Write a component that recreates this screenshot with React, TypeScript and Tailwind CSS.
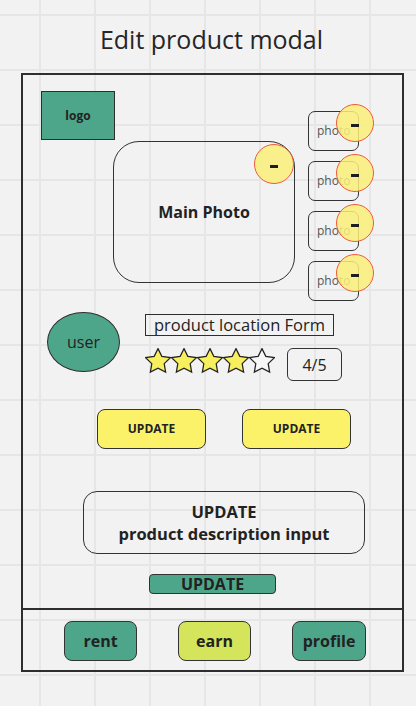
import React from "react";

const font = { fontFamily: '"Open Sans", "Noto Sans", sans-serif' };

function MinusBadge({ size }: { size: "lg" | "sm" }) {
  return (
    <div
      className={
        size === "lg"
          ? "absolute right-0 top-[2px] w-[40px] h-[40px] rounded-full border-[1.5px] border-[#ee5a3c] bg-[#faf07a]/85 flex items-center justify-center"
          : "absolute left-[27px] top-[-8px] w-[38px] h-[38px] rounded-full border-[1.5px] border-[#ee5a3c] bg-[#faf07a]/85 flex items-center justify-center"
      }
    >
      <div className="w-[8px] h-[3px] bg-[#1e1e1e] mt-[4px]" />
    </div>
  );
}

function Star({ filled }: { filled: boolean }) {
  return (
    <svg width="26" height="26" viewBox="1.5 1.5 21 21">
      <polygon
        points="12,2 15.09,8.26 22,9.27 17,14.14 18.18,21.02 12,17.77 5.82,21.02 7,14.14 2,9.27 8.91,8.26"
        fill={filled ? "#f8ef5e" : "#f7f7f7"}
        stroke="#222"
        strokeWidth="1"
        strokeLinejoin="miter"
      />
    </svg>
  );
}

export default function App() {
  return (
    <div
      style={font}
      className="w-[416px] h-[706px] overflow-hidden bg-[#f2f2f2] bg-[linear-gradient(to_right,#e6e6e6_2px,transparent_2px),linear-gradient(to_bottom,#e6e6e6_2px,transparent_2px)] bg-size-[55px_55px] bg-position-[39px_14px] text-[#222]"
    >
      {/* Title */}
      <div className="h-[73px] pt-[22px] pl-[7px] flex justify-center">
        <h1 className="text-[25px] leading-[34px] font-normal text-[#262626]">
          Edit product modal
        </h1>
      </div>

      {/* Modal frame */}
      <div className="ml-[21px] w-[383px] h-[599px] border-2 border-[#2e2e2e] flex flex-col">
        {/* Photos */}
        <div className="flex items-start">
          <div className="flex flex-col">
            <div className="ml-[18px] mt-[16px] w-[74px] h-[49px] bg-[#4ea68a] border-[1.5px] border-[#2e2e2e] flex items-center justify-center">
              <span className="text-[12px] font-bold">logo</span>
            </div>
            <div className="relative ml-[90px] mt-[1px] w-[182px] h-[142px] rounded-[26px] border-[1.5px] border-[#333] flex items-center justify-center">
              <span className="text-[16px] font-bold">Main Photo</span>
              <MinusBadge size="lg" />
            </div>
          </div>
          <div className="ml-[13px] mt-[36px] flex flex-col gap-[10px]">
            {[0, 1, 2, 3].map((i) => (
              <div
                key={i}
                className="relative w-[51px] h-[40px] rounded-[7px] border-[1.5px] border-[#333] flex items-center pl-[8px]"
              >
                <span className="text-[12px] text-[#555]">photo</span>
                <MinusBadge size="sm" />
              </div>
            ))}
          </div>
        </div>

        {/* User + location + rating */}
        <div className="flex items-start">
          <div className="ml-[24px] mt-[11px] w-[73px] h-[60px] rounded-[50%] bg-[#4ea68a] border-[1.5px] border-[#2e2e2e] flex items-center justify-center">
            <span className="text-[16px]">user</span>
          </div>
          <div className="ml-[25px] mt-[13px] flex flex-col">
            <div className="w-[189px] h-[22px] border-[1.5px] border-[#2e2e2e] flex items-center justify-center">
              <span className="text-[16.5px] leading-none">product location Form</span>
            </div>
            <div className="mt-[12px] flex items-start">
              <div className="flex">
                {[true, true, true, true, false].map((f, i) => (
                  <Star key={i} filled={f} />
                ))}
              </div>
              <div className="ml-[12px] w-[55px] h-[33px] rounded-[6px] border-[1.5px] border-[#333] flex items-center justify-center">
                <span className="text-[16px]">4/5</span>
              </div>
            </div>
          </div>
        </div>

        {/* Update buttons */}
        <div className="ml-[74px] mt-[28px] flex gap-[36px]">
          {[0, 1].map((i) => (
            <button
              key={i}
              className="w-[109px] h-[40px] rounded-[8px] bg-[#fcf26a] border-[1.5px] border-[#333] text-[12px] font-bold"
            >
              UPDATE
            </button>
          ))}
        </div>

        {/* Description */}
        <div className="ml-[60px] mt-[42px] w-[282px] h-[63px] rounded-[14px] border-[1.5px] border-[#333] flex flex-col items-center justify-center text-[16.5px] font-bold leading-[22px]">
          <span>UPDATE</span>
          <span>product description input</span>
        </div>

        <button className="ml-[126px] mt-[20px] w-[127px] h-[20px] rounded-[4px] bg-[#4ea68a] border-[1.5px] border-[#333] text-[16px] font-bold leading-none flex items-center justify-center">
          UPDATE
        </button>

        <div className="flex-1" />

        {/* Bottom nav */}
        <div className="h-[62px] border-t-2 border-[#2e2e2e] flex items-start pt-[11px] pl-[41px] gap-[41px]">
          <button className="w-[73px] h-[40px] rounded-[8px] bg-[#4ea68a] border-[1.5px] border-[#333] text-[16px] font-bold">
            rent
          </button>
          <button className="w-[73px] h-[40px] rounded-[8px] bg-[#d4e55c] border-[1.5px] border-[#333] text-[16px] font-bold">
            earn
          </button>
          <button className="w-[74px] h-[40px] rounded-[8px] bg-[#4ea68a] border-[1.5px] border-[#333] text-[16px] font-bold">
            profile
          </button>
        </div>
      </div>
    </div>
  );
}
